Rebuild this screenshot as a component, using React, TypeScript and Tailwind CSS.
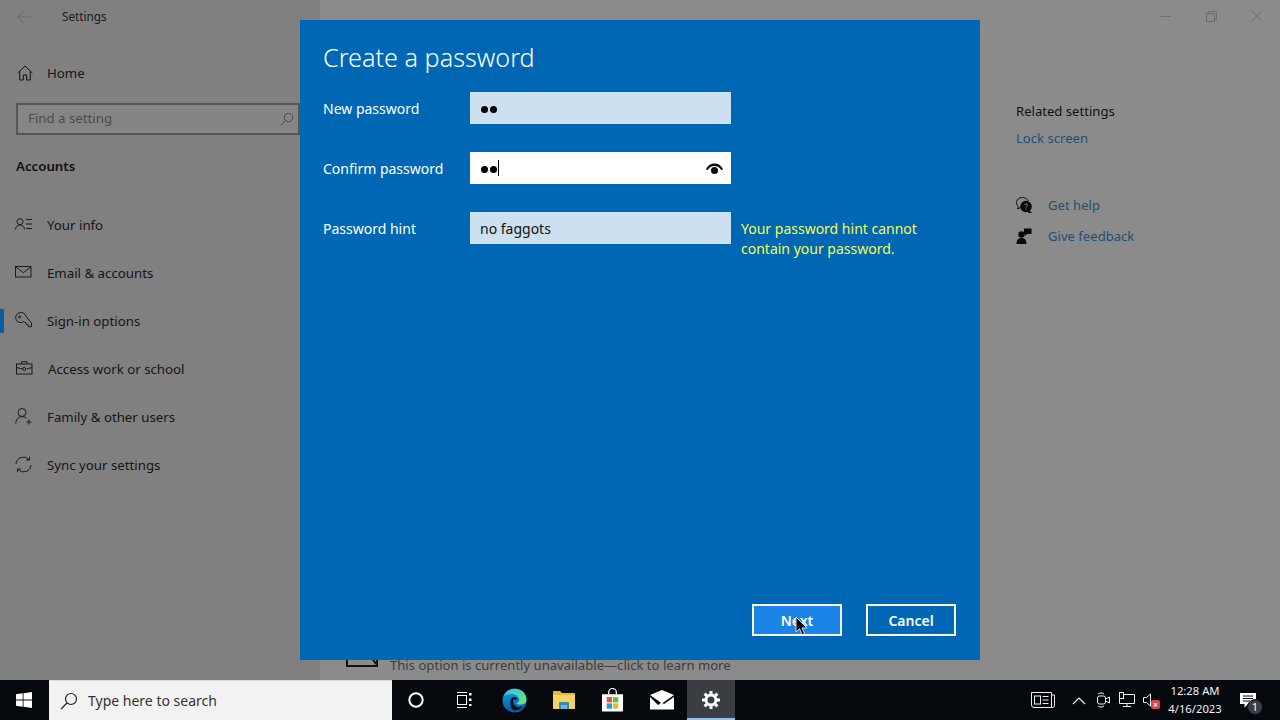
import React from "react";

const F = "font-['Noto_Sans','Open_Sans',sans-serif]";

function S({ children, w = 20, h = 20, vb = "0 0 20 20", className = "" }: { children: React.ReactNode; w?: number; h?: number; vb?: string; className?: string }) {
  return (
    <svg width={w} height={h} viewBox={vb} className={"shrink-0 " + className} fill="none" stroke="currentColor" strokeWidth="1">
      {children}
    </svg>
  );
}

const HomeI = () => (
  <S w={16} h={16} vb="0 0 16 16"><path d="M.7 8 8 1l7.300 7M2.700 6.500V15h3.700v-5h3.200v5h3.700V6.500" /></S>
);
const InfoI = () => (
  <S w={17} h={12} vb="0 0 17 12"><circle cx="5" cy="3.700" r="3" /><path d="M.5 11.500c.3-6 8.700-6 9 0M11 1.500h6M11 6h6M11 10.500h6" /></S>
);
const MailI = () => (
  <S w={17} h={12} vb="0 0 17 12"><rect x=".5" y=".5" width="15.500" height="10.500" /><path d="m.5.700 7.800 6 7.700-6" /></S>
);
const KeyI = () => (
  <S w={17} h={17} vb="0 0 17 17"><path d="M5.500.600a5 5 0 0 1 5.200 3.300l5.800 7.200v3.600l-3-.1-.3-1.700-1.700-.3-.6-1.800L8.500 9.700A5 5 0 1 1 5.500.600z" /><circle cx="4.500" cy="5" r="1" /></S>
);
const BriefI = () => (
  <S w={17} h={14} vb="0 0 17 14"><rect x=".5" y="3" width="15.500" height="10" /><path d="M5.500 3V.7h5.500V3M.5 6.500l6 1.500M16 6.500 10.500 8" /><circle cx="8.200" cy="8" r="1.500" /></S>
);
const FamilyI = () => (
  <S w={17} h={17} vb="0 0 17 17"><circle cx="7" cy="4.500" r="4" /><path d="M.7 15.500c.3-7.500 8-8.500 11-5M11.500 14h5M14 11.500v5" /></S>
);
const SyncI = () => (
  <S w={17} h={17} vb="0 0 17 17"><path d="M1 8A7.500 7.500 0 0 1 14 3.500M16 9A7.500 7.500 0 0 1 3 13.500" /><path d="M14.500.700v3.300h-3.300M2.500 16.300V13h3.300" /></S>
);

const nav = [
  { label: "Your info", icon: <InfoI />, pl: "pl-[15px]" },
  { label: "Email & accounts", icon: <MailI />, pl: "pl-[15px]" },
  { label: "Sign-in options", icon: <KeyI />, pl: "pl-[15px]", active: true },
  { label: "Access work or school", icon: <BriefI />, pl: "pl-[16px]" },
  { label: "Family & other users", icon: <FamilyI />, pl: "pl-[15px]" },
  { label: "Sync your settings", icon: <SyncI />, pl: "pl-[15px]" },
];

function Sidebar() {
  return (
    <aside className="w-[320px] h-full bg-[#808080] flex flex-col text-[#161616] shrink-0">
      <div className="h-[33px] flex items-center pl-[16px] gap-[30px] text-[11.75px]">
        <svg width="16" height="14" viewBox="0 0 16 14" fill="none" stroke="#6f6f6f" strokeWidth="1.200"><path d="M15 7H1.500M7.500 1 1.500 7l6 6" /></svg>
        <span className="text-[#1c1c1c]">Settings</span>
      </div>
      <div className="h-[48px] mt-[16px] flex items-center pl-[17px] gap-[14px] text-[13.25px]">
        <HomeI />
        <span className="leading-5">Home</span>
      </div>
      <div className="ml-[16px] mt-[6px] h-[32px] w-[284px] border-2 border-[#565656] bg-[#858585] flex items-center pl-[10px] pr-[2px] text-[13.25px] text-[#4a4a4a]">
        <span>Find a setting</span>
        <svg className="ml-auto mr-[2px]" width="14" height="14" viewBox="0 0 14 14" fill="none" stroke="#4a4a4a"><circle cx="8.500" cy="5.500" r="4.200" /><path d="M5.500 8.500 1 13" /></svg>
      </div>
      <div className="mt-[21px] pl-[16px] text-[13.25px] font-semibold leading-5 text-[#111]">Accounts</div>
      <nav className="mt-[25px] flex flex-col">
        {nav.map((n) => (
          <div key={n.label} className={"relative h-[48px] flex items-center " + n.pl}>
            {n.active && <div className="absolute left-0 top-[12px] w-[4px] h-[24px] bg-[#0d5d9e]" />}
            <div className="w-[32px] flex text-[#1a1a1a] -mt-[2px]">{n.icon}</div>
            <span className="text-[13.25px] leading-5">{n.label}</span>
          </div>
        ))}
      </nav>
    </aside>
  );
}

function RightPane() {
  return (
    <div className="flex-1 h-full bg-[#8b8b8b] flex text-[#111] min-w-0">
      <div className="w-[696px] flex flex-col justify-end pb-[5px] pl-[26px]">
        <div className="flex items-center gap-[12px] overflow-hidden h-[20px]">
          <svg width="32" height="30" viewBox="0 0 32 30" fill="none" stroke="#111" strokeWidth="2" className="-mt-[26px]"><rect x="1" y="1" width="30" height="28" /><path d="m12 1 18 26" /></svg>
          <span className="text-[13.100px] leading-5 text-[#3d3d3d]">This option is currently unavailable—click to learn more</span>
        </div>
      </div>
      <div className="flex-1 flex flex-col">
        <div className="h-[32px] flex items-center justify-end text-[#6e6e6e]">
          <div className="w-[46px] flex justify-center">
            <svg width="11" height="11" viewBox="0 0 11 11" stroke="currentColor"><path d="M0 5.500h11" /></svg>
          </div>
          <div className="w-[46px] flex justify-center">
            <svg width="11" height="11" viewBox="0 0 11 11" fill="none" stroke="currentColor"><rect x=".5" y="2.500" width="8" height="8" /><path d="M2.500 2.500v-2h8v8h-2" /></svg>
          </div>
          <div className="w-[46px] flex justify-center">
            <svg width="12" height="12" viewBox="0 0 12 12" stroke="currentColor"><path d="m.5.500 11 11M11.500.500l-11 11" /></svg>
          </div>
        </div>
        <div className="mt-[69px] text-[13.100px]">
          <div className="leading-5 text-[#111]">Related settings</div>
          <div className="leading-5 mt-[7px] text-[#264b73]">Lock screen</div>
          <div className="mt-[47px] flex items-center gap-[16px] leading-5 text-[#264b73]">
            <svg width="16" height="16" viewBox="0 0 16 16" className="shrink-0"><path d="M6.500.500C3 .500.500 2.800.500 5.700c0 1.500.7 2.800 1.800 3.700L1.500 12l3-1.500" fill="none" stroke="#0a0a0a" /><path d="M6.500.500c2.800 0 5 1.500 5.800 3.500" fill="none" stroke="#0a0a0a" /><circle cx="10" cy="9.500" r="5.800" fill="#0a0a0a" /><path d="m13 13 3 3h-4z" fill="#0a0a0a" /><path d="M8.500 8c.4-1.500 3-1.500 3 .2 0 1.100-1.500 1-1.500 2.300M10 11.600v1" stroke="#8b8b8b" fill="none" /></svg>
            <span>Get help</span>
          </div>
          <div className="mt-[11px] flex items-center gap-[16px] leading-5 text-[#264b73]">
            <svg width="16" height="16" viewBox="0 0 16 16" className="shrink-0" fill="#0a0a0a"><circle cx="5.500" cy="6.500" r="3.200" /><path d="M.5 16c0-4 2-6 5-6s5 2 5 6zM8 .5h7.500v5.500H11l-2 2V6H8z" /></svg>
            <span>Give feedback</span>
          </div>
        </div>
      </div>
    </div>
  );
}

function Field({ label, children, className = "" }: { label: string; children: React.ReactNode; className?: string }) {
  return (
    <div className={"h-[32px] flex items-center " + className}>
      <span className="w-[147px] pt-[2px] text-[14px] text-white leading-5">{label}</span>
      {children}
    </div>
  );
}

const Dots = () => (
  <span className="flex gap-[2px] ml-[1px] mt-[2px]">
    <span className="w-[7px] h-[7px] rounded-full bg-black" />
    <span className="w-[7px] h-[7px] rounded-full bg-black" />
  </span>
);

function Dialog() {
  return (
    <div className="absolute left-[300px] top-[20px] w-[680px] h-[640px] bg-[#0067b5] flex flex-col pl-[23px] pr-[24px] pb-[24px] text-white">
      <h1 className="mt-[18px] text-[25.200px] leading-[38px] font-light h-[38px]">Create a password</h1>
      <Field label="New password" className="mt-[16px]">
        <div className="w-[261px] h-[32px] bg-[#cce0f0] flex items-center pl-[10px]"><Dots /></div>
      </Field>
      <Field label="Confirm password" className="mt-[28px]">
        <div className="w-[261px] h-[32px] bg-white flex items-center pl-[10px] pr-[8px]">
          <Dots />
          <span className="ml-[1px] w-[1px] h-[16px] bg-black" />
          <svg className="ml-auto mt-[2px]" width="17" height="12" viewBox="0 0 17 12" fill="#0a0a0a"><path d="M0 6.500C3-1.500 14-1.500 17 6.500l-1.800.5C12.500 1.500 4.500 1.500 1.800 7z" /><circle cx="8.500" cy="7.500" r="3.500" /></svg>
        </div>
      </Field>
      <div className="mt-[28px] flex items-start">
        <span className="w-[147px] h-[32px] pt-[2px] flex items-center text-[14px] leading-5">Password hint</span>
        <div className="w-[261px] h-[32px] bg-[#cce0f0] flex items-center pl-[10px] text-[14px] text-[#111]">no faggots</div>
        <p className="ml-[10px] w-[200px] mt-[7px] text-[14px] leading-[20px] text-[#f5fb50]">Your password hint cannot contain your password.</p>
      </div>
      <div className="mt-auto flex justify-end gap-[24px]">
        <button className="relative w-[90px] h-[32px] border-2 border-white bg-[#1a85e6] text-[14px] font-semibold flex items-center justify-center">
          Next
          <svg className="absolute left-[41px] top-[10px]" width="13" height="20" viewBox="0 0 13 20"><path d="M1 1v15l3.500-3.300 2.500 6 2.500-1-2.500-5.800h5z" fill="#050505" stroke="#fff" strokeWidth=".8" /></svg>
        </button>
        <button className="w-[90px] h-[32px] border-2 border-white text-[14px] font-semibold flex items-center justify-center">Cancel</button>
      </div>
    </div>
  );
}

function TaskIcon({ children, w = 49, active = false }: { children: React.ReactNode; w?: number; active?: boolean }) {
  return (
    <div className={"h-full flex items-center justify-center relative shrink-0 " + (active ? "bg-[#3a3e42]" : "")} style={{ width: w }}>
      {children}
      {active && <div className="absolute left-0 right-0 bottom-0 h-[2px] bg-[#8cc4ee]" />}
    </div>
  );
}

const Tray = ({ children }: { children: React.ReactNode }) => (
  <div className="relative w-[24px] h-full flex items-center justify-center shrink-0">{children}</div>
);

function Taskbar() {
  return (
    <footer className="h-[40px] bg-[#05090e] flex items-center text-white shrink-0">
      <div className="w-[49px] h-full flex items-center pl-[16px]">
        <svg width="16" height="16" viewBox="0 0 16 16" fill="#fff"><path d="M0 2.300 6.700 1.300v6.300H0zM7.500 1.200 16 0v7.600H7.500zM0 8.400h6.700v6.300L0 13.700zM7.500 8.400H16V16l-8.500-1.200z" /></svg>
      </div>
      <div className="w-[343px] h-full bg-[#f2f2f2] border-t border-[#d8d8d8] flex items-center pl-[11px] text-[#333] text-[14px]">
        <svg width="18" height="18" viewBox="0 0 18 18" fill="none" stroke="#222" strokeWidth="1.200"><circle cx="11" cy="7" r="5.500" /><path d="M7 11 1 17" /></svg>
        <span className="ml-[10px]">Type here to search</span>
      </div>
      <div className="flex h-full items-center">
        <TaskIcon w={48}>
          <svg width="16" height="16" viewBox="0 0 16 16" fill="none" stroke="#fff" strokeWidth="2"><circle cx="8" cy="8" r="6.700" /></svg>
        </TaskIcon>
        <TaskIcon w={48}>
          <svg width="16" height="16" viewBox="0 0 16 16" fill="none" stroke="#fff"><path d="M1 .5h10M1 15.500h10" /><rect x="1.500" y="3.500" width="9" height="9" /><path d="M13 1h2.500v2.500H13zM13 6.500h2.500V9H13zM13 12h2.500v2H13z" fill="#fff" strokeWidth="0" /></svg>
        </TaskIcon>
        <TaskIcon w={52}>
          <svg width="25" height="25" viewBox="0 0 25 25">
            <defs>
              <linearGradient id="e1" x1="0" y1="0" x2="0" y2="1"><stop offset="0" stopColor="#1b9de2" /><stop offset="1" stopColor="#0c59a4" /></linearGradient>
              <linearGradient id="e2" x1="0" y1="0" x2="1" y2="1"><stop offset="0" stopColor="#35c1f1" /><stop offset="1" stopColor="#66eb6e" /></linearGradient>
            </defs>
            <circle cx="12.500" cy="12.500" r="12" fill="url(#e1)" />
            <path d="M2 8C5 1 13-.5 19 2.500c4 2 5.500 6 5.500 9.500 0 3-3 4.500-6.500 4.500-2 0-3.500-.5-4-1 3-1 3.500-3 3-5C16 7 12 5.500 8.500 6 6 6.300 3.500 7 2 8z" fill="url(#e2)" />
            <path d="M8.500 13c0-2.500 2-4 4-4s3 1.500 3 2.500h-4c-1 3 .5 6.500 4 7.500 2 .5 4 0 5.500-1-2 3.500-6 5-9.500 4C8 20.500 8.500 16 8.500 13z" fill="#0a0f18" />
          </svg>
        </TaskIcon>
        <TaskIcon w={48}>
          <svg width="22" height="20" viewBox="0 0 22 20">
            <path d="M0 2a1 1 0 0 1 1-1h6l2 2h12a1 1 0 0 1 1 1v3H0z" fill="#e9b82e" />
            <path d="M0 5h22v13a1 1 0 0 1-1 1H1a1 1 0 0 1-1-1z" fill="#f6d365" />
            <path d="M6 12h10v7h-2v-4H8v4H6z" fill="#3f87b5" />
            <rect x="8" y="15" width="6" height="4" fill="#74b3d8" />
          </svg>
        </TaskIcon>
        <TaskIcon w={49}>
          <svg width="23" height="24" viewBox="0 0 24 24">
            <path d="M8 6V4a4 4 0 0 1 8 0v2" fill="none" stroke="#fff" strokeWidth="1.300" />
            <path d="M1 6h22v17a1 1 0 0 1-1 1H2a1 1 0 0 1-1-1z" fill="#fff" />
            <rect x="6" y="9" width="5.500" height="5.500" fill="#e2553a" />
            <rect x="12.500" y="9" width="5.500" height="5.500" fill="#72b82e" />
            <rect x="6" y="15.500" width="5.500" height="5.500" fill="#1ea0cf" />
            <rect x="12.500" y="15.500" width="5.500" height="5.500" fill="#e9b82e" />
          </svg>
        </TaskIcon>
        <TaskIcon w={50}>
          <svg width="24" height="20" viewBox="0 0 24 20">
            <path d="M0 5 12 0l12 5-12 8.500z" fill="#fff" />
            <path d="M0 7v12.500h24V7l-10 7-2.500-1.500L8 15z" fill="#fff" />
          </svg>
        </TaskIcon>
        <TaskIcon w={48} active>
          <svg width="20" height="20" viewBox="0 0 20 20" fill="none" stroke="#fff">
            <circle cx="10" cy="10" r="5" strokeWidth="3" />
            <path d="M10 1v3.500M10 15.500V19M1 10h3.500M15.500 10H19M3.600 3.600 6 6M14 14l2.400 2.400M3.600 16.400 6 14M14 6l2.400-2.400" strokeWidth="3" />
          </svg>
        </TaskIcon>
      </div>
      <div className="ml-auto flex items-center h-full pr-[11px]">
        <div className="mr-[12px] w-[24px] h-full flex items-center">
          <svg width="24" height="16" viewBox="0 0 24 16" fill="none" stroke="#eee"><path d="M.5.500h20v15H3a2.500 2.500 0 0 1-2.500-2.500zM20.500 3h3v10.500a2 2 0 0 1-2 2h-1" /><rect x="3.500" y="4" width="6" height="8" /><path d="M11.500 4.500h6M11.500 8h6M11.500 11.500h6" /></svg>
        </div>
        <Tray>
          <svg width="14" height="9" viewBox="0 0 14 9" fill="none" stroke="#eee" strokeWidth="1.200"><path d="m1 8 6-6 6 6" /></svg>
        </Tray>
        <Tray>
          <svg width="14" height="16" viewBox="0 0 14 16" fill="none" stroke="#eee"><rect x="1.500" y="4" width="8" height="8" rx="2" /><path d="m9.500 7 4-2v6l-4-2M2 2C3 .7 7 .7 8 2M2 14c1 1.300 5 1.300 6 0" /></svg>
        </Tray>
        <Tray>
          <svg width="16" height="16" viewBox="0 0 16 16" fill="none" stroke="#eee"><path d="M4.500 2.500h11v9h-15V7M8 11.500v3M4 14.500h8" /><rect x=".5" y=".5" width="4" height="6" fill="#05090e" /></svg>
        </Tray>
        <Tray>
          <svg className="-ml-[4px]" width="12" height="14" viewBox="0 0 12 14" fill="none" stroke="#eee"><path d="M.5 4.500h3L7.500 1v12l-4-3.500h-3z" /></svg>
          <span className="absolute left-[12px] top-[20px] w-[9px] h-[9px] rounded-[2px] bg-[#d8414f] text-[8px] leading-[9px] text-center text-white font-bold">×</span>
        </Tray>
        <div className="w-[60px] ml-[2px] text-[11.250px] leading-[18px] flex flex-col items-center text-[#f0f0f0] shrink-0">
          <span>12:28 AM</span>
          <span>4/16/2023</span>
        </div>
        <div className="relative ml-[2px] w-[42px] h-full flex items-center justify-center shrink-0">
          <svg width="16" height="15" viewBox="0 0 16 15"><path d="M0 0h16v11H8l-3.500 3.500V11H0z" fill="#fff" /><path d="M3 3h10M3 5.500h10M3 8h7" stroke="#05090e" /></svg>
          <span className="absolute left-[20px] top-[19px] w-[16px] h-[16px] rounded-full bg-[#3d3d3d] border border-[#111] text-[11px] leading-[14px] text-center text-white">1</span>
        </div>
      </div>
    </footer>
  );
}

export default function App() {
  return (
    <div className={"relative w-[1280px] h-[720px] overflow-hidden flex flex-col bg-[#808080] " + F}>
      <div className="h-[680px] flex">
        <Sidebar />
        <RightPane />
      </div>
      <Dialog />
      <Taskbar />
    </div>
  );
}
